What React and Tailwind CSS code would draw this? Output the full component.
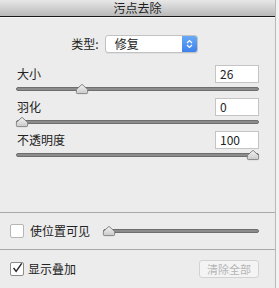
const font = { fontFamily: '"Noto Sans CJK SC", "Liberation Sans", sans-serif' };

function Thumb() {
  return (
    <svg width="13" height="11" viewBox="0 0 13 11" className="absolute top-1/2 -translate-y-1/2 -translate-x-1/2">
      <defs>
        <linearGradient id="tg" x1="0" y1="0" x2="0" y2="1">
          <stop offset="0" stopColor="#f4f4f4" />
          <stop offset="1" stopColor="#c9c9c9" />
        </linearGradient>
      </defs>
      <path d="M6.5 0.8 L11.8 5.6 Q12.2 6 12.2 6.6 L12.2 8.8 Q12.2 10.2 10.8 10.2 L2.2 10.2 Q0.8 10.2 0.8 8.8 L0.8 6.6 Q0.8 6 1.2 5.6 Z" fill="url(#tg)" stroke="#777" strokeWidth="0.9" />
    </svg>
  );
}

function Slider({ pct, className }) {
  return (
    <div className={`relative h-[11px] ${className}`}>
      <div className="absolute left-0 right-0 top-1/2 -translate-y-1/2 h-[4px] rounded-full bg-[#8c8c8c] border border-[#6e6e6e]" />
      <div className="absolute top-0 bottom-0" style={{ left: `calc(6px + (100% - 12px) * ${pct})` }}>
        <Thumb />
      </div>
    </div>
  );
}

function Field({ label, value, pct }) {
  return (
    <div className="flex flex-col">
      <div className="flex items-center justify-between h-[17px]">
        <span className="text-[12px] text-[#222] ml-[1px]">{label}</span>
        <div className="w-[44px] h-[18px] bg-white border border-[#c4c4c4] flex items-center px-[4px] text-[12px] text-[#222]">{value}</div>
      </div>
      <Slider pct={pct} className="mt-[1px]" />
    </div>
  );
}

export default function App() {
  return (
    <div className="w-[279px] h-[288px] bg-[#f2f2f2] overflow-hidden" style={font}>
      <div className="w-[276px] h-full bg-[#ececec] border-r border-[#b9b9b9] flex flex-col">
        <div className="h-[17px] bg-gradient-to-b from-[#e8e8e8] to-[#b9b9b9] border-b border-[#1a1a1a] flex items-center justify-center">
          <span className="text-[12px] text-[#1e1e1e] leading-none">污点去除</span>
        </div>
        <div className="h-[1px] bg-[#f7f7f7]" />

        <div className="flex items-center justify-center mt-[17px] mr-[6px] gap-[6px]">
          <span className="text-[12px] text-[#222]">类型:</span>
          <div className="w-[93px] h-[18px] bg-white border border-[#c2c2c2] rounded-[3px] flex items-center overflow-hidden shadow-[0_1px_0_rgba(0,0,0,0.05)]">
            <span className="flex-1 text-[12px] text-[#222] pl-[9px]">修复</span>
            <div className="w-[15px] h-full bg-gradient-to-b from-[#6aa9f5] to-[#3d82ec] flex flex-col items-center justify-center">
              <svg width="7" height="10" viewBox="0 0 7 10" fill="none" stroke="white" strokeWidth="1.2">
                <path d="M1 4 L3.5 1.5 L6 4" />
                <path d="M1 6 L3.5 8.5 L6 6" />
              </svg>
            </div>
          </div>
        </div>

        <div className="flex flex-col gap-[4px] pl-[16px] pr-[16px] mt-[12px]">
          <Field label="大小" value="26" pct={0.258} />
          <Field label="羽化" value="0" pct={0} />
          <Field label="不透明度" value="100" pct={1} />
        </div>

        <div className="flex-1" />
        <div className="h-[1px] bg-[#a8a8a8]" />

        <div className="h-[36px] flex items-center pl-[10px] pr-[16px]">
          <div className="w-[14px] h-[14px] bg-white border border-[#b5b5b5] rounded-[2px]" />
          <span className="text-[12px] text-[#222] ml-[6px]">使位置可见</span>
          <Slider pct={0} className="flex-1 ml-[13px]" />
        </div>

        <div className="h-[1px] bg-[#a8a8a8]" />

        <div className="h-[38px] flex items-center pl-[10px] pr-[16px]">
          <div className="w-[14px] h-[14px] bg-white border border-[#8c8c8c] rounded-[2px] flex items-center justify-center">
            <svg width="14" height="14" viewBox="0 0 14 14" fill="none" stroke="#222" strokeWidth="1.6" className="-mt-[2px]">
              <path d="M3 7 L6 11 L12.5 1.5" />
            </svg>
          </div>
          <span className="text-[12px] text-[#222] ml-[4px]">显示叠加</span>
          <div className="flex-1" />
          <div className="w-[60px] h-[18px] border border-[#d2d2d2] bg-[#f4f4f4] rounded-[3px] flex items-center justify-center text-[11px] text-[#b5b5b5]">清除全部</div>
        </div>
      </div>
    </div>
  );
}
